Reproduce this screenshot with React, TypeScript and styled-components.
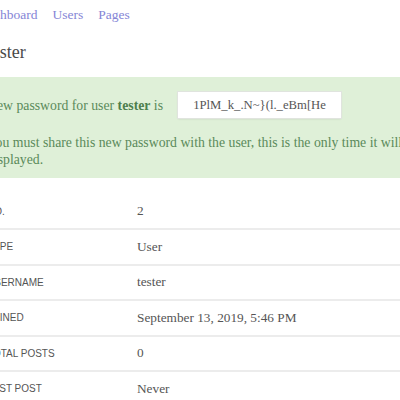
import React from "react";
import styled, { createGlobalStyle } from "styled-components";

const Global = createGlobalStyle`
  html, body { margin: 0; padding: 0; background: #fff; }
  body { font-family: "Liberation Serif", "Times New Roman", serif; color: #444; overflow: hidden; }
`;

const Page = styled.div`
  width: 460px;
  margin-left: -13px;
`;

const Nav = styled.nav`
  display: flex;
  gap: 15px;
  padding-top: 5px;
  margin-left: -8px;
  height: 20px;
  align-items: center;
`;

const NavLink = styled.a`
  font-size: 13.5px;
  line-height: 20px;
  color: #8585d6;
  text-decoration: none;
`;

const Title = styled.h1`
  margin: 0 0 0 -5px;
  padding-top: 10px;
  font-size: 18px;
  font-weight: normal;
  color: #4a4a4a;
  line-height: 34px;
  height: 42px;
`;

const Alert = styled.div`
  background: #dff0d8;
  color: #5a8a5a;
  margin-left: -20px;
  padding: 15px 0 10.5px 20px;
  font-size: 13.75px;
  line-height: 17px;
`;

const PwRow = styled.div`
  display: flex;
  align-items: center;
  gap: 15px;
`;

const Strong = styled.strong`
  font-weight: bold;
  color: #4d7f4d;
`;

const PwBox = styled.div`
  width: 163px;
  height: 26px;
  background: #fff;
  box-shadow: 0 0 0 1px #e0e4de, 0 1px 2px rgba(0,0,0,0.12);
  display: flex;
  align-items: center;
  justify-content: center;
  color: #555;
  font-size: 12.7px;
`;

const Note = styled.p`
  margin: 15.5px 0 0;
  white-space: nowrap;
`;

const Table = styled.div`
  margin-top: 16.5px;
`;

const Row = styled.div<{ $last?: boolean }>`
  display: grid;
  grid-template-columns: 150px 1fr;
  height: 33.5px;
  align-items: center;
  border-bottom: ${(p) => (p.$last ? "none" : "2px solid #ececec")};
`;

const Label = styled.div`
  font-family: "Liberation Sans", Arial, sans-serif;
  font-size: 10px;
  text-transform: uppercase;
  color: #555;
`;

const Value = styled.div`
  font-size: 13.3px;
  color: #555;
`;

const password = "1PlM_k_.N~}(l._eBm[He";

const rows = [
  ["No.", "2"],
  ["Type", "User"],
  ["Username", "tester"],
  ["Joined", "September 13, 2019, 5:46 PM"],
  ["Total posts", "0"],
  ["Last post", "Never"],
];

export default function App() {
  return (
    <Page>
      <Global />
      <Nav>
        <NavLink href="#">Dashboard</NavLink>
        <NavLink href="#">Users</NavLink>
        <NavLink href="#">Pages</NavLink>
      </Nav>
      <Title>Tester</Title>
      <Alert>
        <PwRow>
          <span>
            New password for user <Strong>tester</Strong> is
          </span>
          <PwBox>{password}</PwBox>
        </PwRow>
        <Note>
          You must share this new password with the user, this is the only time it will be
          <br />
          displayed.
        </Note>
      </Alert>
      <Table>
        {rows.map(([l, v], i) => (
          <Row key={l} $last={i === rows.length - 1}>
            <Label>{l}</Label>
            <Value>{v}</Value>
          </Row>
        ))}
      </Table>
    </Page>
  );
}
